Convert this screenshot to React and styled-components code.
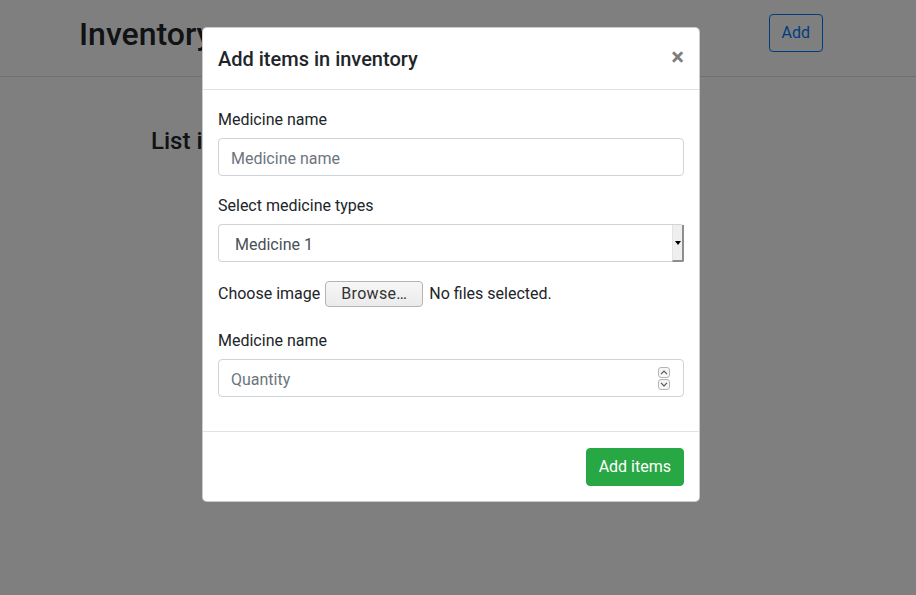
import React from 'react'
import styled, { createGlobalStyle } from 'styled-components'

const GlobalStyle = createGlobalStyle`
  * { box-sizing: border-box; }
  body {
    margin: 0;
    font-family: Roboto, "Liberation Sans", sans-serif;
    font-size: 16px;
    line-height: 1.5;
    color: #212529;
    background: #fff;
    overflow: hidden;
  }
`

const Page = styled.div`
  position: relative;
  width: 916px;
  height: 595px;
  overflow: hidden;
`

const Header = styled.header`
  display: flex;
  justify-content: space-between;
  align-items: flex-start;
  height: 77px;
  padding: 14px 93px 0 79px;
  border-bottom: 1px solid #dee2e6;
`

const Title = styled.h2`
  margin: 1px 0 0;
  font-size: 32px;
  font-weight: 500;
  line-height: 1.2;
`

const OutlineButton = styled.button`
  height: 38px;
  padding: 0 12px;
  font: inherit;
  color: #007bff;
  background: transparent;
  border: 1px solid #007bff;
  border-radius: 4px;
`

const Main = styled.main`
  padding: 50px 0 0 151px;
`

const SubTitle = styled.h4`
  margin: 0;
  font-size: 24px;
  font-weight: 500;
  line-height: 1.2;
`

const Backdrop = styled.div`
  position: absolute;
  inset: 0;
  background: rgba(0, 0, 0, 0.5);
  padding: 27px 0 0 202px;
`

const Dialog = styled.div`
  width: 498px;
  background: #fff;
  border: 1px solid rgba(0, 0, 0, 0.2);
  border-radius: 5px;
`

const ModalHeader = styled.div`
  display: flex;
  align-items: center;
  justify-content: space-between;
  padding: 16px 16px 15px 15px;
  border-bottom: 1px solid #dee2e6;
`

const ModalTitle = styled.h5`
  margin: 0;
  font-size: 20px;
  font-weight: 500;
  line-height: 30px;
`

const Close = styled.span`
  font-size: 24px;
  font-weight: 700;
  line-height: 1;
  color: #000;
  opacity: 0.5;
  margin-top: -4px;
  margin-right: -1px;
`

const ModalBody = styled.div`
  padding: 18px 15px 16px;
`

const Group = styled.div`
  margin-bottom: 18px;
`

const Label = styled.label`
  display: block;
  margin-bottom: 6px;
`

const Field = styled.div`
  display: flex;
  align-items: center;
  height: 38px;
  padding: 3px ${p => p.$padRight ?? 12}px 0 ${p => p.$padLeft ?? 12}px;
  border: 1px solid #ced4da;
  border-right-width: ${p => p.$select ? 0 : 1}px;
  border-radius: 4px;
  color: ${p => p.$placeholder ? '#6c757d' : '#495057'};
`

const FieldText = styled.span`
  flex: 1;
`

const DropButton = styled.span`
  display: flex;
  align-items: center;
  justify-content: center;
  align-self: stretch;
  width: 12px;
  margin: -3px 0 -1px;
  background: #efefef;
  border-left: 1px solid #e3e3e3;
  border-right: 2px solid #8e8e8e;
  border-bottom: 2px solid #8e8e8e;
  border-bottom-right-radius: 2px;
`

const Spinner = styled.span`
  display: flex;
  flex-direction: column;
  gap: 1px;
  margin-top: -3px;
`

const SpinBox = styled.span`
  display: flex;
  align-items: center;
  justify-content: center;
  width: 12px;
  height: 11px;
  border: 1px solid #b5b5b5;
  border-radius: 3px;
  background: #f6f6f6;
`

const FileRow = styled.div`
  display: flex;
  align-items: center;
  height: 28px;
  margin-bottom: 21px;
`

const BrowseButton = styled.span`
  display: inline-flex;
  align-items: center;
  justify-content: center;
  width: 98px;
  height: 26px;
  margin: 0 6px 0 5px;
  color: #333;
  letter-spacing: 0.3px;
  background: linear-gradient(#f7f7f7, #ebebeb);
  border: 1px solid #b4b4b4;
  border-radius: 4px;
`

const ModalFooter = styled.div`
  display: flex;
  justify-content: flex-end;
  padding: 16px 15px 15px;
  border-top: 1px solid #dee2e6;
`

const SuccessButton = styled.button`
  height: 38px;
  padding: 0 12px;
  font: inherit;
  color: #fff;
  background: #28a745;
  border: 1px solid #28a745;
  border-radius: 4px;
`

const Chevron = ({ up }) => (
  <svg width="8" height="5" viewBox="0 0 8 5">
    <path d={up ? 'M1 4.2 L4 1.2 L7 4.2' : 'M1 0.8 L4 3.8 L7 0.8'} fill="none" stroke="#555" strokeWidth="1.2" />
  </svg>
)

export default function App() {
  return (
    <Page>
      <GlobalStyle />
      <Header>
        <Title>Inventory</Title>
        <OutlineButton>Add</OutlineButton>
      </Header>
      <Main>
        <SubTitle>List items in inventory</SubTitle>
      </Main>
      <Backdrop>
        <Dialog>
          <ModalHeader>
            <ModalTitle>Add items in inventory</ModalTitle>
            <Close>×</Close>
          </ModalHeader>
          <ModalBody>
            <Group>
              <Label>Medicine name</Label>
              <Field $placeholder>Medicine name</Field>
            </Group>
            <Group>
              <Label>Select medicine types</Label>
              <Field $select $padLeft={16} $padRight={0}>
                <FieldText>Medicine 1</FieldText>
                <DropButton>
                  <svg width="6" height="4" viewBox="0 0 6 4">
                    <path d="M0 0 H6 L3 4 Z" fill="#000" />
                  </svg>
                </DropButton>
              </Field>
            </Group>
            <FileRow>
              Choose image
              <BrowseButton>Browse…</BrowseButton>
              No files selected.
            </FileRow>
            <Group>
              <Label>Medicine name</Label>
              <Field $placeholder $padRight={13}>
                <FieldText>Quantity</FieldText>
                <Spinner>
                  <SpinBox><Chevron up /></SpinBox>
                  <SpinBox><Chevron /></SpinBox>
                </Spinner>
              </Field>
            </Group>
          </ModalBody>
          <ModalFooter>
            <SuccessButton>Add items</SuccessButton>
          </ModalFooter>
        </Dialog>
      </Backdrop>
    </Page>
  )
}
